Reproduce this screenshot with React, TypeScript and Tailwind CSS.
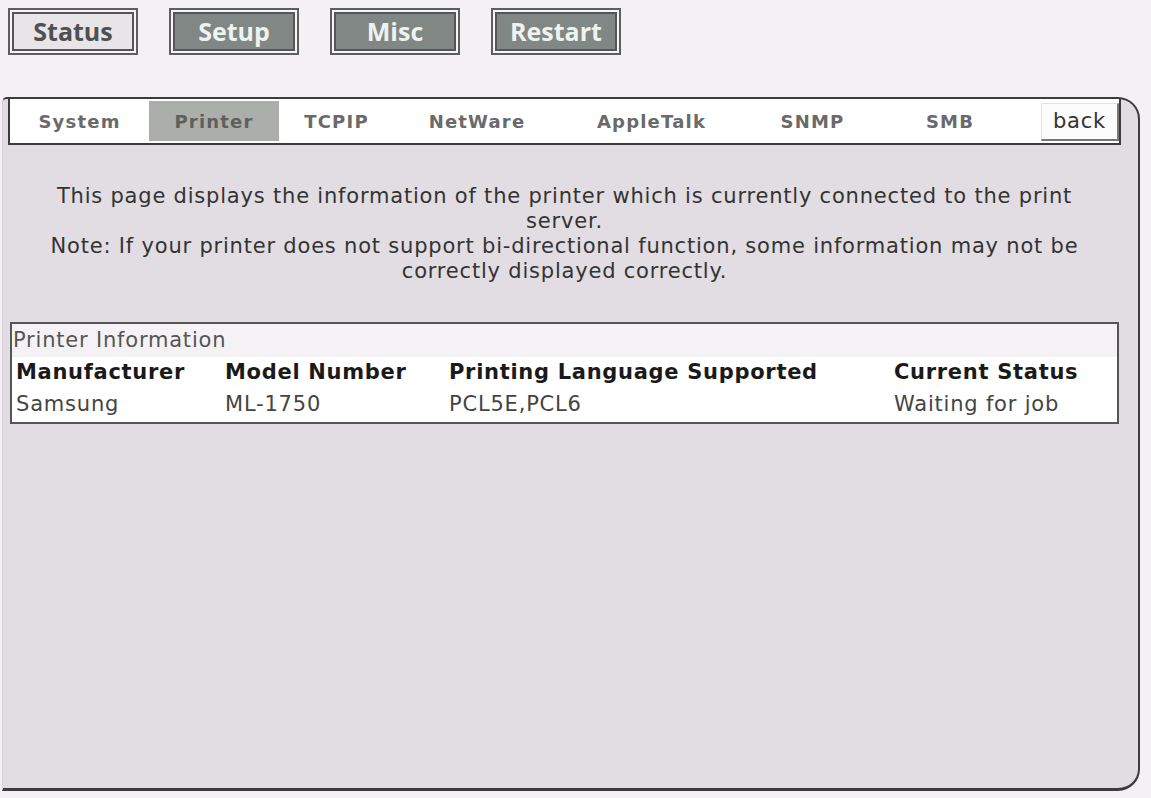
import React from "react";

const body = { fontFamily: '"DejaVu Sans", Verdana, sans-serif' };
const btnFont = { fontFamily: '"Open Sans", "DejaVu Sans", sans-serif' };

function TopButton({ label, active }: { label: string; active?: boolean }) {
  return (
    <div className="w-[130px] h-[47px] border-2 border-[#5e5e5e] bg-[#f6f6f6] p-[2px]">
      <div
        className={
          "h-full w-full border-2 border-[#555] flex items-center justify-center text-[25px] font-bold leading-none " +
          (active ? "bg-[#e7e5e8] text-[#505050]" : "bg-[#808784] text-[#eef3ef]")
        }
        style={btnFont}
      >
        {label}
      </div>
    </div>
  );
}

const tabs: { label: string; w: string; active?: boolean }[] = [
  { label: "System", w: "w-[139px]" },
  { label: "Printer", w: "w-[130px]", active: true },
  { label: "TCPIP", w: "w-[115px]" },
  { label: "NetWare", w: "w-[166px]" },
  { label: "AppleTalk", w: "w-[183px]" },
  { label: "SNMP", w: "w-[139px]" },
  { label: "SMB", w: "w-[136px]" },
];

export default function App() {
  return (
    <div className="w-[1151px] h-[798px] overflow-hidden bg-[#f3f1f4]" style={body}>
      {/* top navigation buttons */}
      <div className="flex gap-[31px] pl-[8px] pt-[8px]">
        <TopButton label="Status" active />
        <TopButton label="Setup" />
        <TopButton label="Misc" />
        <TopButton label="Restart" />
      </div>

      {/* main panel */}
      <div className="mt-[42px] ml-[2px] w-[1138px] h-[694px] bg-[#e1dde2] border-t-2 border-r-2 border-b-[3px] border-l border-t-[#3c3c3c] border-r-[#3c3c3c] border-b-[#3c3c3c] border-l-[#d6d2d7] rounded-tr-[22px] rounded-br-[22px] rounded-tl-[5px] flex flex-col">
        {/* sub tabs */}
        <div className="ml-[5px] w-[1113px] h-[46px] bg-white border-l-2 border-r-2 border-b-2 border-[#3c3c3c] flex items-stretch pt-[2px] pb-[2px]">
          {tabs.map((t) => (
            <div
              key={t.label}
              className={
                t.w +
                " flex items-center justify-center text-[18px] font-bold tracking-[1.2px] " +
                (t.active ? "bg-[#abaeaa] text-[#5e605e]" : "text-[#6a6a6a]")
              }
            >
              {t.label}
            </div>
          ))}
          <div className="flex-1" />
          <div className="w-[78px] mt-[2px] bg-[#fcfcfc] border-t border-l border-[#e2e2e2] border-r-2 border-b-2 border-r-[#777] border-b-[#777] flex items-center justify-center text-[21px] tracking-[0.8px] text-[#333]">
            back
          </div>
        </div>

        {/* description */}
        <div className="ml-[5px] w-[1113px] mt-[39px] text-center text-[21px] leading-[25px] tracking-[0.8px] text-[#333] px-[30px]">
          <p>This page displays the information of the printer which is currently connected to the print server.</p>
          <p>Note: If your printer does not support bi-directional function, some information may not be correctly displayed correctly.</p>
        </div>

        {/* printer information table */}
        <div className="ml-[7px] w-[1109px] mt-[38px] border-2 border-[#555] bg-white">
          <div className="h-[33px] bg-[#f4f2f4] flex items-center pl-[1px] text-[21px] tracking-[0.8px] text-[#555]">
            Printer Information
          </div>
          <div className="h-[31px] grid grid-cols-[209px_224px_445px_1fr] items-center text-[21px] font-bold tracking-[0.7px] text-[#1a1a1a]">
            <div className="pl-[4px]">Manufacturer</div>
            <div className="pl-[4px]">Model Number</div>
            <div className="pl-[4px]">Printing Language Supported</div>
            <div className="pl-[4px]">Current Status</div>
          </div>
          <div className="h-[34px] grid grid-cols-[209px_224px_445px_1fr] items-center text-[21px] tracking-[0.8px] text-[#444]">
            <div className="pl-[4px]">Samsung</div>
            <div className="pl-[4px]">ML-1750</div>
            <div className="pl-[4px]">PCL5E,PCL6</div>
            <div className="pl-[4px]">Waiting for job</div>
          </div>
        </div>
      </div>
    </div>
  );
}
